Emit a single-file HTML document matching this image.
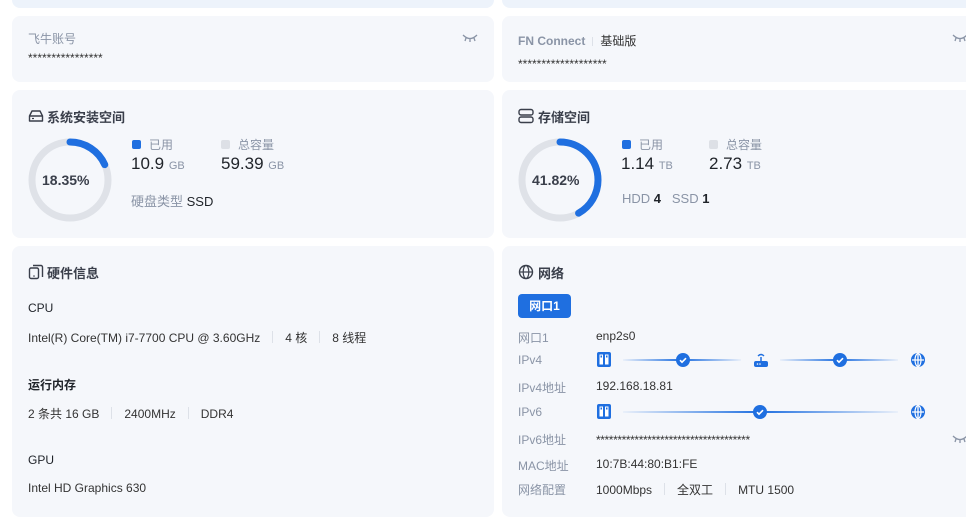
<!DOCTYPE html>
<html><head><meta charset="utf-8"><style>
*{margin:0;padding:0;box-sizing:border-box}
body{width:966px;height:529px;background:#fff;overflow:hidden;position:relative;font-family:"Liberation Sans","Noto Sans CJK SC",sans-serif;color:#1f2329}
.c{position:absolute;background:#f5f7fb;border-radius:8px}
.a{position:absolute;white-space:nowrap}
.lbl{color:#8a94a6;font-size:12px}
.v{color:#333;font-size:12px}
.t{font-size:13px;font-weight:bold;color:#3a3f4b}
.sep{display:inline-block;width:1px;height:12px;background:#dde1e8;margin:0 12px;vertical-align:-1px}
.big{font-size:17px;color:#1f2329}
.unit{font-size:11px;color:#8a94a6}
.sq{display:inline-block;width:9px;height:9px;border-radius:2px;margin-right:8px;vertical-align:0}
.ln{position:absolute;height:2px}
</style></head><body>
<div class="c" style="left:12px;top:-10px;width:482px;height:18px;background:#edf3fb"></div>
<div class="c" style="left:502px;top:-10px;width:480px;height:18px;background:#edf3fb"></div>

<div class="c" style="left:12px;top:16px;width:482px;height:66px"></div>
<div class="a lbl" style="left:28px;top:30px">飞牛账号</div>
<div class="a v" style="left:28px;top:51px;font-size:12px">****************</div>
<svg class="a" style="left:462px;top:33px" width="16" height="10" viewBox="0 0 16 10"><path d="M1 2Q8 9 15 2M4 5l-1 3M8 6v3M12 5l1 3" stroke="#8a94a6" stroke-width="1.3" fill="none"/></svg>

<div class="c" style="left:502px;top:16px;width:480px;height:66px"></div>
<div class="a lbl" style="left:518px;top:32px;font-weight:bold">FN Connect<span class="sep" style="height:9px;margin:0 7px"></span><span style="color:#333;font-weight:normal">基础版</span></div>
<div class="a v" style="left:518px;top:57px;font-size:12px">*******************</div>
<svg class="a" style="left:952px;top:33px" width="16" height="10" viewBox="0 0 16 10"><path d="M1 2Q8 9 15 2M4 5l-1 3M8 6v3M12 5l1 3" stroke="#8a94a6" stroke-width="1.3" fill="none"/></svg>

<!-- system -->
<div class="c" style="left:12px;top:90px;width:482px;height:148px"></div>
<svg class="a" style="left:28px;top:109px" width="16" height="14" viewBox="0 0 16 14"><path d="M1.5 7L4 2h8l2.5 5v5h-13z M1.5 7h13" stroke="#3a3f4b" stroke-width="1.4" fill="none" stroke-linejoin="round"/><path d="M4 9.5h2" stroke="#3a3f4b" stroke-width="1.2"/></svg>
<div class="a t" style="left:47px;top:107px">系统安装空间</div>
<svg class="a" style="left:28px;top:138px" width="84" height="84" viewBox="0 0 84 84"><circle cx="42" cy="42" r="38" stroke="#dfe2e8" stroke-width="7" fill="none"/><circle cx="42" cy="42" r="38" stroke="#1f6fe0" stroke-width="7" fill="none" stroke-dasharray="43.8 300" transform="rotate(-90 42 42)" stroke-linecap="round"/></svg>
<div class="a" style="left:42px;top:172px;font-size:14px;font-weight:bold;color:#3a3f4b">18.35%</div>
<div class="a lbl" style="left:132px;top:136px"><span class="sq" style="background:#1f6fe0"></span>已用</div>
<div class="a lbl" style="left:221px;top:136px"><span class="sq" style="background:#dde0e6"></span>总容量</div>
<div class="a big" style="left:131px;top:154px">10.9 <span class="unit">GB</span></div>
<div class="a big" style="left:221px;top:154px">59.39 <span class="unit">GB</span></div>
<div class="a" style="left:131px;top:191px;font-size:13px;color:#8a94a6">硬盘类型 <span style="color:#1f2329">SSD</span></div>

<!-- storage -->
<div class="c" style="left:502px;top:90px;width:480px;height:148px"></div>
<svg class="a" style="left:518px;top:108px" width="16" height="16" viewBox="0 0 16 16"><rect x="1" y="1.5" width="14" height="5.5" rx="2" stroke="#3a3f4b" stroke-width="1.4" fill="none"/><rect x="1" y="9" width="14" height="5.5" rx="2" stroke="#3a3f4b" stroke-width="1.4" fill="none"/></svg>
<div class="a t" style="left:538px;top:107px">存储空间</div>
<svg class="a" style="left:518px;top:138px" width="84" height="84" viewBox="0 0 84 84"><circle cx="42" cy="42" r="38" stroke="#dfe2e8" stroke-width="7" fill="none"/><circle cx="42" cy="42" r="38" stroke="#1f6fe0" stroke-width="7" fill="none" stroke-dasharray="99.8 300" transform="rotate(-90 42 42)" stroke-linecap="round"/></svg>
<div class="a" style="left:532px;top:172px;font-size:14px;font-weight:bold;color:#3a3f4b">41.82%</div>
<div class="a lbl" style="left:622px;top:136px"><span class="sq" style="background:#1f6fe0"></span>已用</div>
<div class="a lbl" style="left:709px;top:136px"><span class="sq" style="background:#dde0e6"></span>总容量</div>
<div class="a big" style="left:621px;top:154px">1.14 <span class="unit">TB</span></div>
<div class="a big" style="left:709px;top:154px">2.73 <span class="unit">TB</span></div>
<div class="a" style="left:622px;top:191px;font-size:13px;color:#8a94a6">HDD <b style="color:#1f2329">4</b>&nbsp;&nbsp;&nbsp;SSD <b style="color:#1f2329">1</b></div>

<!-- hardware -->
<div class="c" style="left:12px;top:246px;width:482px;height:271px"></div>
<svg class="a" style="left:28px;top:264px" width="16" height="16" viewBox="0 0 16 16"><rect x="1.5" y="4" width="9" height="10.5" rx="1.5" stroke="#3a3f4b" stroke-width="1.4" fill="none"/><path d="M5 1.5h8a1.5 1.5 0 0 1 1.5 1.5v10" stroke="#3a3f4b" stroke-width="1.4" fill="none"/><circle cx="6" cy="12" r=".8" fill="#3a3f4b"/></svg>
<div class="a t" style="left:47px;top:263px">硬件信息</div>
<div class="a" style="left:28px;top:301px;font-size:12px;color:#1f2329">CPU</div>
<div class="a v" style="left:28px;top:329px">Intel(R) Core(TM) i7-7700 CPU @ 3.60GHz<span class="sep"></span>4 核<span class="sep"></span>8 线程</div>
<div class="a" style="left:28px;top:376px;font-size:12px;font-weight:bold;color:#1f2329">运行内存</div>
<div class="a v" style="left:28px;top:405px">2 条共 16 GB<span class="sep"></span>2400MHz<span class="sep"></span>DDR4</div>
<div class="a" style="left:28px;top:453px;font-size:12px;color:#1f2329">GPU</div>
<div class="a v" style="left:28px;top:481px">Intel HD Graphics 630</div>

<!-- network -->
<div class="c" style="left:502px;top:246px;width:480px;height:271px"></div>
<svg class="a" style="left:518px;top:264px" width="16" height="16" viewBox="0 0 16 16"><circle cx="8" cy="8" r="6.5" stroke="#3a3f4b" stroke-width="1.4" fill="none"/><ellipse cx="8" cy="8" rx="2.8" ry="6.5" stroke="#3a3f4b" stroke-width="1.2" fill="none"/><path d="M1.5 8h13" stroke="#3a3f4b" stroke-width="1.2"/></svg>
<div class="a t" style="left:538px;top:263px">网络</div>
<div class="a" style="left:518px;top:294px;width:53px;height:24px;background:#1f6fe0;border-radius:4px;color:#fff;font-size:12px;font-weight:bold;text-align:center;line-height:24px">网口1</div>
<div class="a lbl" style="left:518px;top:329px">网口1</div><div class="a v" style="left:596px;top:329px">enp2s0</div>
<div class="a lbl" style="left:518px;top:353px">IPv4</div>
<div class="a lbl" style="left:518px;top:379px">IPv4地址</div><div class="a v" style="left:596px;top:379px">192.168.18.81</div>
<div class="a lbl" style="left:518px;top:405px">IPv6</div>
<div class="a lbl" style="left:518px;top:431px">IPv6地址</div><div class="a v" style="left:596px;top:433px;font-size:12px;letter-spacing:-0.4px">************************************</div>
<svg class="a" style="left:952px;top:434px" width="16" height="10" viewBox="0 0 16 10"><path d="M1 2Q8 9 15 2M4 5l-1 3M8 6v3M12 5l1 3" stroke="#8a94a6" stroke-width="1.3" fill="none"/></svg>
<div class="a lbl" style="left:518px;top:457px">MAC地址</div><div class="a v" style="left:596px;top:457px">10:7B:44:80:B1:FE</div>
<div class="a lbl" style="left:518px;top:481px">网络配置</div><div class="a v" style="left:596px;top:481px">1000Mbps<span class="sep"></span>全双工<span class="sep"></span>MTU 1500</div>

<!-- lines -->
<div class="ln" style="left:623px;top:359px;width:118px;background:linear-gradient(90deg,rgba(31,111,224,.05),#1f6fe0 50%,rgba(31,111,224,.05))"></div>
<div class="ln" style="left:780px;top:359px;width:118px;background:linear-gradient(90deg,rgba(31,111,224,.05),#1f6fe0 50%,rgba(31,111,224,.05))"></div>
<div class="ln" style="left:623px;top:411px;width:275px;background:linear-gradient(90deg,rgba(31,111,224,.05),#1f6fe0 50%,rgba(31,111,224,.05))"></div>
<svg width="0" height="0" style="position:absolute"><defs>
<g id="nas"><rect x="0" y="0" width="14" height="15" rx="2" fill="#1f6fe0"/><rect x="2.5" y="2.5" width="3.5" height="10" fill="#fff"/><rect x="8" y="2.5" width="3.5" height="10" fill="#fff"/><rect x="3.5" y="3.5" width="1.5" height="2" fill="#1f6fe0"/><rect x="9" y="3.5" width="1.5" height="2" fill="#1f6fe0"/></g>
<g id="chk"><circle cx="7" cy="7" r="7" fill="#1f6fe0"/><path d="M4 7.2l2 2 4-4" stroke="#fff" stroke-width="1.6" fill="none"/></g>
<g id="glb"><circle cx="7" cy="7" r="7" fill="#1f6fe0"/><path d="M7 0.5v13M1 7h12" stroke="#fff" stroke-width="1.3"/><ellipse cx="7" cy="7" rx="3" ry="6.5" stroke="#fff" stroke-width="1.2" fill="none"/></g>
</defs></svg>
<svg class="a" style="left:597px;top:352px" width="14" height="15"><use href="#nas"/></svg>
<svg class="a" style="left:676px;top:353px" width="14" height="14"><use href="#chk"/></svg>
<svg class="a" style="left:753px;top:352px" width="16" height="16" viewBox="0 0 16 16"><rect x="1" y="9" width="14" height="6" rx="2" fill="#1f6fe0"/><path d="M8 9V5" stroke="#1f6fe0" stroke-width="1.5"/><path d="M5 4Q8 1 11 4" stroke="#1f6fe0" stroke-width="1.4" fill="none"/><circle cx="4.5" cy="12" r=".8" fill="#fff"/><circle cx="7" cy="12" r=".8" fill="#fff"/></svg>
<svg class="a" style="left:833px;top:353px" width="14" height="14"><use href="#chk"/></svg>
<svg class="a" style="left:911px;top:353px" width="14" height="14"><use href="#glb"/></svg>
<svg class="a" style="left:597px;top:404px" width="14" height="15"><use href="#nas"/></svg>
<svg class="a" style="left:753px;top:405px" width="14" height="14"><use href="#chk"/></svg>
<svg class="a" style="left:911px;top:405px" width="14" height="14"><use href="#glb"/></svg>
</body></html>
